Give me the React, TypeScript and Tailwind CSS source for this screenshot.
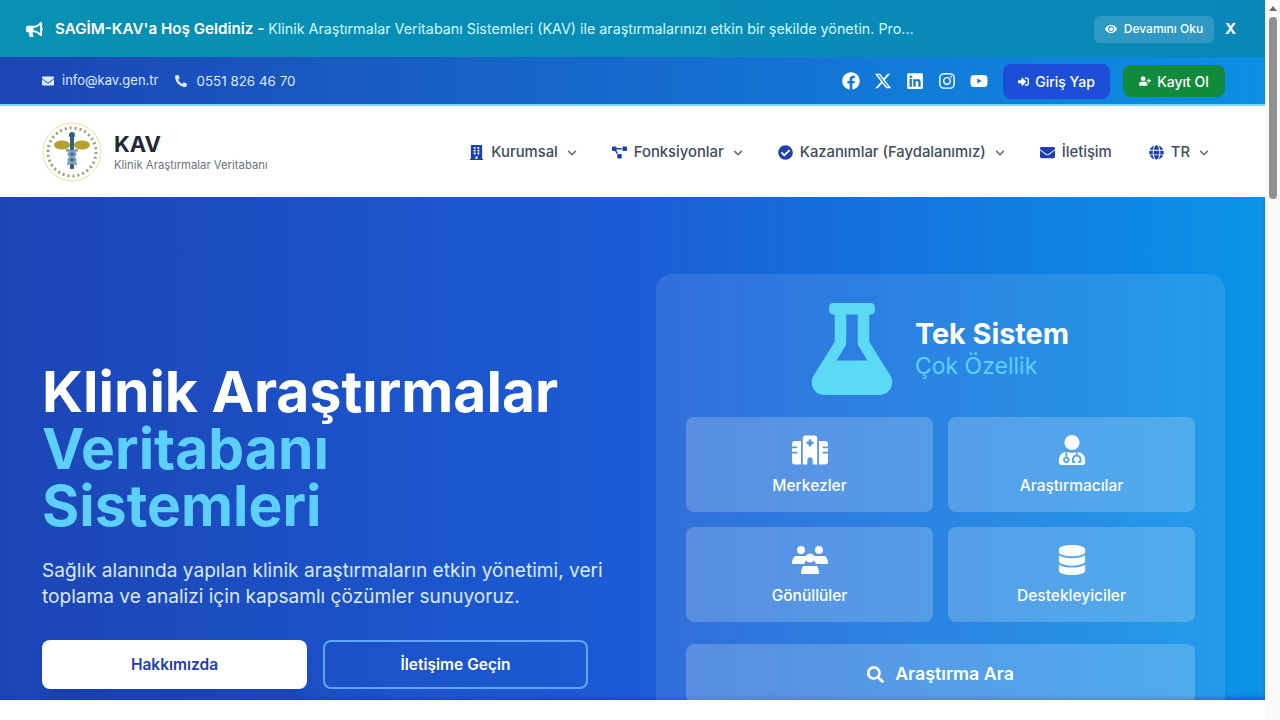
import { FaBullhorn, FaEnvelope, FaPhoneAlt, FaFacebook, FaLinkedin, FaInstagram, FaYoutube, FaSignInAlt, FaUserPlus, FaBuilding, FaProjectDiagram, FaCheckCircle, FaGlobe, FaFlask, FaUserMd, FaDatabase, FaSearch, FaEye, FaChevronDown } from "react-icons/fa";
import { FaXTwitter, FaHospital } from "react-icons/fa6";

function NavItem({ icon, label, arrow = true }: { icon: React.ReactNode; label: string; arrow?: boolean }) {
	return (
		<div className="flex items-center gap-[7px] text-[14.8px] font-medium text-[#414c5c]">
			<span className="text-[#1e40af] text-[15px]">{icon}</span>
			<span>{label}</span>
			{arrow && <FaChevronDown className="ml-[2px] text-[10px] text-[#6b7280]" />}
		</div>
	);
}

function Card({ icon, label }: { icon: React.ReactNode; label: string }) {
	return (
		<div className="h-[95px] pt-[4px] rounded-lg bg-white/20 flex flex-col items-center justify-center gap-[9px] text-white">
			<span className="h-[30px] flex items-center justify-center">{icon}</span>
			<span className="text-[15.5px] font-medium">{label}</span>
		</div>
	);
}

export default function App() {
	return (
		<div className="font-['Inter',sans-serif] h-screen overflow-hidden flex bg-white">
			<div className="w-[1265px] shrink-0">
				<div className="h-[57px] px-[26px] pt-[1px] flex items-center bg-gradient-to-r from-[#0891b2] to-[#0a87b9] text-white">
					<FaBullhorn className="text-[17px] mr-[12px]" />
					<span className="text-[15.2px] font-semibold mr-[4px]">SAGİM-KAV'a Hoş Geldiniz -</span>
					<span className="text-[14.3px] text-[#cffafe]">Klinik Araştırmalar Veritabanı Sistemleri (KAV) ile araştırmalarınızı etkin bir şekilde yönetin. Pro...</span>
					<div className="ml-auto flex items-center gap-[11px]">
						<div className="w-[120px] h-[27px] rounded-md bg-white/15 flex items-center justify-center gap-[7px] text-[12px] font-medium">
							<FaEye className="text-[12px]" />
							Devamını Oku
						</div>
						<span className="w-[14px] text-[15px] font-bold">X</span>
					</div>
				</div>
				<div className="h-[49px] px-[40px] pt-[1px] flex items-center bg-gradient-to-r from-[#1c45b5] to-[#0a8fe4] text-[#dbeafe] border-b-2 border-[#7dd3fc]">
					<FaEnvelope className="ml-[2px] text-[12px] mr-[8px]" />
					<span className="text-[13px]">info@kav.gen.tr</span>
					<FaPhoneAlt className="text-[12px] ml-[17px] mr-[9px]" />
					<span className="text-[13.4px]">0551 826 46 70</span>
					<div className="ml-auto flex items-center gap-[14px] text-white text-[18px]">
						<FaFacebook />
						<FaXTwitter />
						<FaLinkedin />
						<FaInstagram />
						<FaYoutube />
						<div className="h-[35px] w-[107px] ml-[1px] rounded-lg bg-[#1d4ed8] flex items-center justify-center gap-[6px] text-[14px] font-medium">
							<FaSignInAlt className="text-[11px]" />
							Giriş Yap
						</div>
						<div className="h-[32px] w-[102px] -ml-[1px] rounded-lg bg-[#128a3c] flex items-center justify-center gap-[6px] text-[14px] font-medium">
							<FaUserPlus className="text-[12px]" />
							Kayıt Ol
						</div>
					</div>
				</div>
				<div className="h-[91px] pl-[42px] pr-[56px] flex items-center bg-white">
					<svg viewBox="0 0 60 60" className="w-[60px] h-[60px] mr-[12px]">
						<circle cx="30" cy="30" r="29" fill="#fffdf0" stroke="#e5e0b8" strokeWidth="1" />
						<circle cx="30" cy="30" r="24" fill="#fff" stroke="#9a9f90" strokeWidth="3" strokeDasharray="2 3" />
						<ellipse cx="20" cy="23" rx="8" ry="4.5" fill="#b3a22c" />
						<ellipse cx="40" cy="23" rx="8" ry="4.5" fill="#b3a22c" />
						<rect x="28" y="13" width="4" height="34" fill="#35607f" />
						<circle cx="30" cy="13" r="3" fill="#35607f" />
						<path d="M24 28 C34 30 36 32 30 35 C24 38 26 40 35 42" fill="none" stroke="#7f9db5" strokeWidth="2.5" />
						<path d="M36 28 C26 30 24 32 30 35 C36 38 34 40 25 42" fill="none" stroke="#7f9db5" strokeWidth="2.5" />
					</svg>
					<div className="flex flex-col">
						<span className="text-[22px] leading-[26px] font-bold text-[#1f2937]">KAV</span>
						<span className="text-[11.3px] leading-[16px] text-[#6b7280]">Klinik Araştırmalar Veritabanı</span>
					</div>
					<div className="ml-auto pt-[2px] flex items-center gap-[35px]">
						<NavItem icon={<FaBuilding />} label="Kurumsal" />
						<NavItem icon={<FaProjectDiagram />} label="Fonksiyonlar" />
						<NavItem icon={<FaCheckCircle />} label="Kazanımlar (Faydalanımız)" />
						<NavItem icon={<FaEnvelope />} label="İletişim" arrow={false} />
						<div className="ml-[2px]">
							<NavItem icon={<FaGlobe />} label="TR" />
						</div>
					</div>
				</div>
				<div className="h-[503px] overflow-hidden pl-[42px] pr-[40px] flex gap-[50px] bg-gradient-to-r from-[#1c45b5] via-[#1b5cd6] to-[#0a93e8] shadow-[inset_0_-3px_3px_rgba(30,64,175,0.5)]">
					<div className="w-[564px] shrink-0 pt-[166px]">
						<h1 className="text-[57px] leading-[57px] font-bold text-white">
							<span className="block">Klinik Araştırmalar</span>
							<span className="block text-[#5cd0fb]">Veritabanı</span>
							<span className="block text-[#5cd0fb]">Sistemleri</span>
						</h1>
						<p className="mt-[23px] text-[19.1px] leading-[26px] text-[#dbeafe]">Sağlık alanında yapılan klinik araştırmaların etkin yönetimi, veri toplama ve analizi için kapsamlı çözümler sunuyoruz.</p>
						<div className="mt-[31px] flex gap-[16px]">
							<div className="w-[265px] h-[49px] rounded-lg bg-white shadow-lg flex items-center justify-center text-[15.5px] font-semibold text-[#1e40af]">Hakkımızda</div>
							<div className="w-[265px] h-[49px] rounded-lg border-2 border-[#60a5fa] flex items-center justify-center text-[15.5px] font-semibold text-white">İletişime Geçin</div>
						</div>
					</div>
					<div className="mt-[77px] w-[569px] h-[500px] shrink-0 rounded-2xl bg-white/10 px-[30px] pt-[29px]">
						<div className="flex items-center justify-center gap-[17px]">
							<FaFlask className="-ml-[6px] text-[#5cd9f5] text-[92px]" />
							<div className="flex flex-col pb-[2px]">
								<span className="text-[28.8px] leading-[36px] font-bold text-white">Tek Sistem</span>
								<span className="text-[23px] leading-[28px] text-[#5cd0fb]">Çok Özellik</span>
							</div>
						</div>
						<div className="mt-[22px] grid grid-cols-2 gap-x-[15px] gap-y-[15px]">
							<Card icon={<FaHospital className="text-[36px]" />} label="Merkezler" />
							<Card icon={<FaUserMd className="text-[30px]" />} label="Araştırmacılar" />
							<Card
								icon={
									<svg viewBox="0 0 36 30" className="w-[36px] h-[30px] fill-white">
										<circle cx="9" cy="5" r="4" />
										<circle cx="27" cy="5" r="4" />
										<path d="M3 11h11l1 3-3 5H0c0-4 1-6 3-8z" />
										<path d="M33 11H22l-1 3 3 5h12c0-4-1-6-3-8z" />
										<circle cx="18" cy="13" r="4.5" />
										<path d="M11 21h14c1 2 2 4 2 8H9c0-4 1-6 2-8z" />
									</svg>
								}
								label="Gönüllüler"
							/>
							<Card icon={<FaDatabase className="text-[30px]" />} label="Destekleyiciler" />
						</div>
						<div className="mt-[22px] h-[60px] rounded-lg bg-white/20 flex items-center justify-center gap-[11px] text-white text-[17.8px] font-semibold">
							<FaSearch className="text-[17px]" />
							Araştırma Ara
						</div>
					</div>
				</div>
			</div>
			{/* page scrollbar */}
			<div className="w-[15px] shrink-0 h-full bg-[#fafafa] flex flex-col items-center">
				<svg viewBox="0 0 10 6" className="mt-[6px] w-[8px] h-[5px] fill-[#6b6b6b]">
					<path d="M5 0 10 6H0z" />
				</svg>
				<div className="mt-[6px] w-[8px] h-[182px] rounded-full bg-[#909090]" />
			</div>
		</div>
	);
}
